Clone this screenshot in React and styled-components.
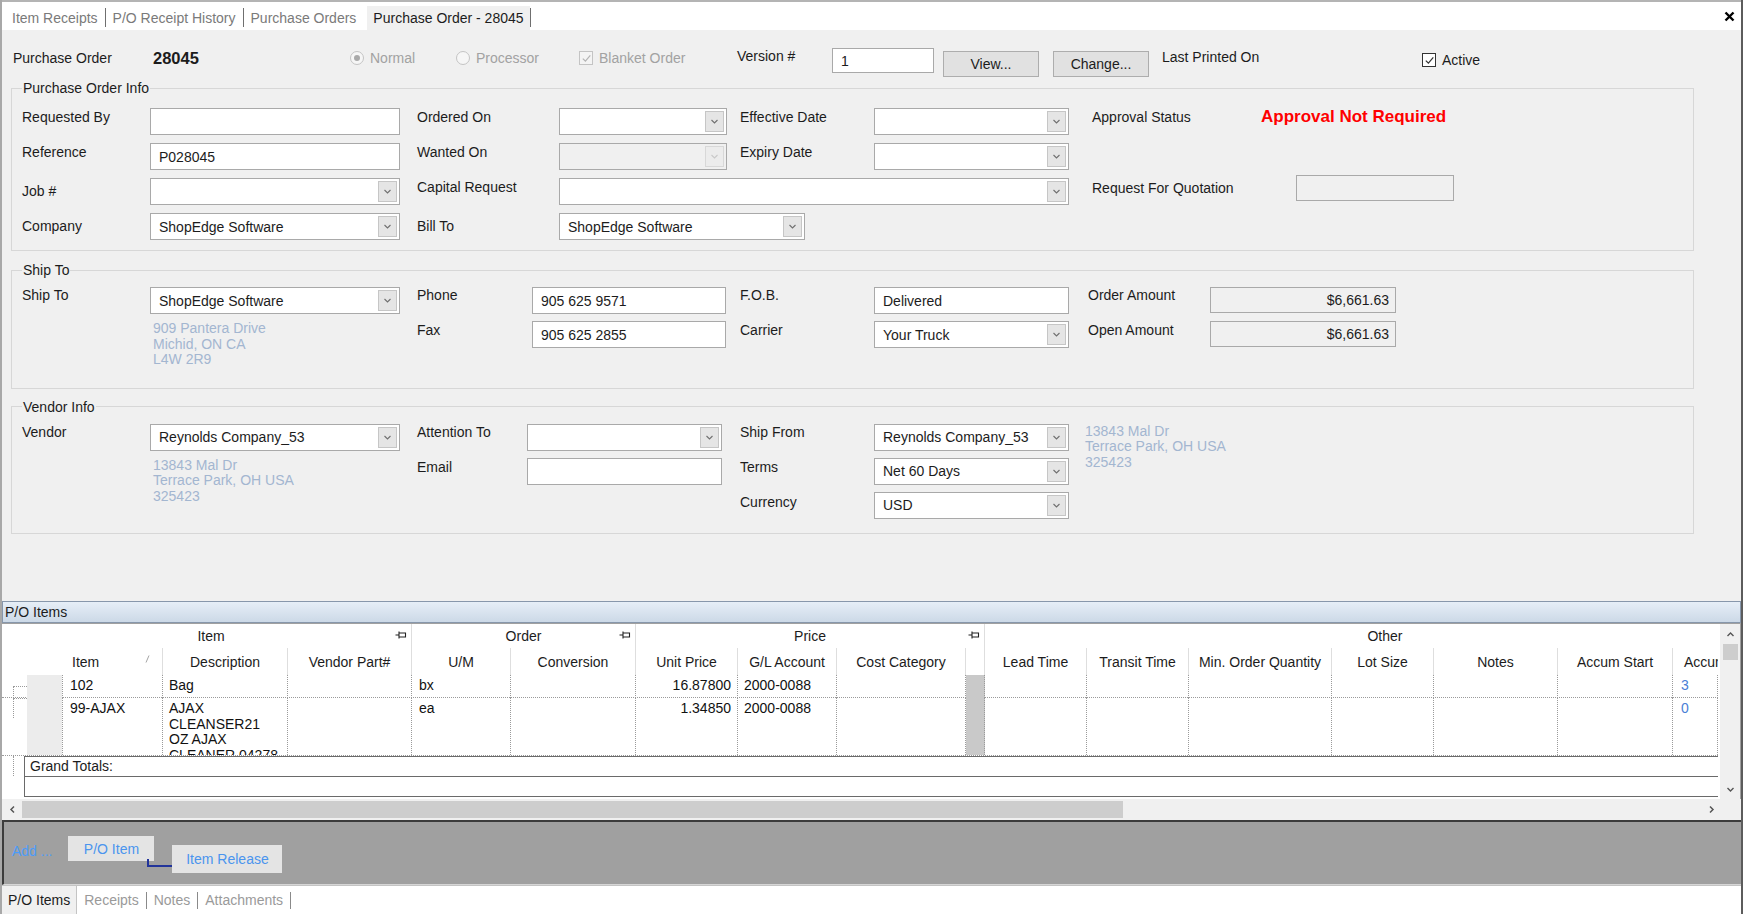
import React from "react";
import styled, { createGlobalStyle, css } from "styled-components";

const FONT = `"Liberation Sans", Arial, Helvetica, sans-serif`;

const GlobalStyle = createGlobalStyle`
  * { box-sizing: border-box; }
  html, body { margin: 0; padding: 0; background: #f0f0f0; }
  body { font-family: ${FONT}; font-size: 14px; color: #1c1c1c; }
`;

const place = css`
  ${(p) => (p.$col ? `grid-column: ${p.$col};` : "")}
  ${(p) => (p.$row ? `grid-row: ${p.$row};` : "")}
`;

/* ---------- icons ---------- */

const CHEVRONS = {
  down: "M1.5 3l3 3 3-3",
  up: "M1.5 6l3-3 3 3",
  left: "M6 1.5l-3 3 3 3",
  right: "M3 1.5l3 3-3 3",
};

const Chevron = ({ dir = "down", color = "#6a6a6a", size = 9, width = 1.1 }) => (
  <svg width={size} height={size} viewBox="0 0 9 9">
    <path d={CHEVRONS[dir]} fill="none" stroke={color} strokeWidth={width} />
  </svg>
);

const PinIcon = () => (
  <svg width="12" height="10" viewBox="0 0 12 10">
    <path d="M0.5 5H4M4 1.5V8.5M4 3H10.5V7H4" fill="none" stroke="#222" strokeWidth="1.1" />
  </svg>
);

const CloseIcon = () => (
  <svg width="11" height="11" viewBox="0 0 11 11">
    <path d="M1.5 1.5L9.5 9.5M9.5 1.5L1.5 9.5" stroke="#000" strokeWidth="2.4" />
  </svg>
);

const CheckMark = ({ color }) => (
  <svg width="11" height="11" viewBox="0 0 11 11">
    <path d="M1.8 5.6l2.6 2.6 4.9-5.8" fill="none" stroke={color} strokeWidth="1.2" />
  </svg>
);

/* ---------- window ---------- */

const Window = styled.div`
  width: 1743px;
  height: 914px;
  display: flex;
  flex-direction: column;
  background: #f0f0f0;
  border-left: 2px solid #a8a8a8;
  border-right: 2px solid #5c5c5c;
  overflow: hidden;
`;

const TopTabs = styled.div`
  height: 30px;
  flex: none;
  display: flex;
  align-items: flex-end;
  background: #fff;
  border-top: 2px solid #b4b4b4;
  padding-left: 3px;
`;

const Tab = styled.div`
  height: 24px;
  display: flex;
  align-items: center;
  padding: 0 ${(p) => (p.$active ? 6 : 7)}px;
  white-space: nowrap;
  color: ${(p) => (p.$active ? "#1c1c1c" : "#7a7a7a")};
  background: ${(p) => (p.$active ? "#f0f0f0" : "transparent")};
  ${(p) => (p.$active ? "margin-left: 4px;" : "")}
`;

const TabSep = styled.span`
  width: 1px;
  height: 19px;
  margin-bottom: 3px;
  background: #6f6f6f;
`;

const CloseBtn = styled.div`
  margin-left: auto;
  margin-right: 6px;
  align-self: center;
  display: flex;
`;

const Body = styled.div`
  flex: 1;
  min-height: 0;
  padding-left: 9px;
  display: flex;
  flex-direction: column;
`;

/* ---------- header row ---------- */

const HeaderRow = styled.div`
  height: 50px;
  flex: none;
  padding-top: 6px;
  display: flex;
  align-items: center;
`;

const HCell = styled.div`
  width: ${(p) => p.$w}px;
  margin-left: ${(p) => p.$ml || 0}px;
  margin-top: ${(p) => p.$mt || 0}px;
  margin-bottom: ${(p) => p.$mb || 0}px;
  display: flex;
  align-items: center;
  gap: 6px;
  white-space: nowrap;
  color: ${(p) => (p.$dim ? "#a2a2a2" : "#1c1c1c")};
`;

const PoNumber = styled.span`
  font-weight: bold;
  font-size: 16.5px;
`;

const RadioDot = styled.span`
  width: 14px;
  height: 14px;
  border-radius: 50%;
  border: 1px solid #c4c4c4;
  background: #f6f6f6;
  display: flex;
  align-items: center;
  justify-content: center;
  &::after {
    content: "";
    width: 6px;
    height: 6px;
    border-radius: 50%;
    background: ${(p) => (p.$on ? "#a9a9a9" : "transparent")};
  }
`;

const CheckBox = styled.span`
  width: 14px;
  height: 14px;
  border: 1px solid ${(p) => (p.$disabled ? "#c4c4c4" : "#333")};
  background: ${(p) => (p.$disabled ? "#f4f4f4" : "#fff")};
  display: flex;
  align-items: center;
  justify-content: center;
`;

const Button = styled.div`
  width: 96px;
  height: 26px;
  margin-left: ${(p) => p.$ml}px;
  margin-top: 12px;
  display: flex;
  align-items: center;
  justify-content: center;
  background: #e1e1e1;
  border: 1px solid #adadad;
`;

/* ---------- form groups ---------- */

const Group = styled.fieldset`
  width: 1683px;
  flex: none;
  margin: ${(p) => p.$mt || 0}px 0 0 0;
  padding: ${(p) => p.$pt}px 10px ${(p) => p.$pb}px 10px;
  border: 1px solid #d7d7d7;
  min-width: 0;
`;

const Legend = styled.legend`
  padding: 0 1px;
  line-height: 16px;
  color: #1c1c1c;
`;

const FormGrid = styled.div`
  display: grid;
  grid-template-columns: ${(p) => p.$cols};
  grid-auto-rows: minmax(27px, auto);
  row-gap: ${(p) => p.$gap}px;
  align-items: start;
`;

const Label = styled.div`
  ${place}
  padding-left: ${(p) => p.$pl || 0}px;
  padding-top: ${(p) => (p.$pt === undefined ? 1 : p.$pt)}px;
  line-height: 16px;
  white-space: nowrap;
  color: #1c1c1c;
`;

const Box = styled.div`
  ${place}
  width: ${(p) => p.$w}px;
  height: ${(p) => p.$h || 27}px;
  margin-left: ${(p) => p.$ml || 0}px;
  margin-top: ${(p) => p.$mt || 0}px;
  display: flex;
  align-items: center;
  justify-content: ${(p) => (p.$right ? "flex-end" : "flex-start")};
  padding: 0 ${(p) => (p.$right ? 6 : 2)}px 0 8px;
  background: ${(p) => (p.$disabled ? "#f0f0f0" : "#fff")};
  border: 1px solid #a9a9a9;
  white-space: nowrap;
  overflow: hidden;
`;

const BoxText = styled.span`
  flex: 1;
`;

const DropBtn = styled.span`
  flex: none;
  width: 19px;
  height: 21px;
  display: flex;
  align-items: center;
  justify-content: center;
  background: ${(p) => (p.$disabled ? "#ececec" : "#e5e5e5")};
  border: 1px solid ${(p) => (p.$disabled ? "#d8d8d8" : "#c6c6c6")};
`;

const Combo = ({ value, disabled, ...rest }) => (
  <Box $disabled={disabled} {...rest}>
    <BoxText>{value}</BoxText>
    <DropBtn $disabled={disabled}>
      <Chevron color={disabled ? "#c9c9c9" : "#707070"} />
    </DropBtn>
  </Box>
);

const Approval = styled.div`
  ${place}
  color: #ff0000;
  font-weight: bold;
  font-size: 17px;
  line-height: 18px;
  white-space: nowrap;
`;

const Address = styled.div`
  ${place}
  padding-left: ${(p) => p.$pl || 0}px;
  color: #a3b6d0;
  line-height: 15.5px;
  white-space: nowrap;
`;

const Spacer = styled.div`
  flex: 1;
`;

/* ---------- items grid ---------- */

const PanelHeader = styled.div`
  height: 22px;
  flex: none;
  display: flex;
  align-items: center;
  padding-left: 2px;
  border: 1px solid #8797ab;
  background: linear-gradient(#e6eef7, #ccd9e7);
`;

const GridFrame = styled.div`
  height: 176px;
  flex: none;
  display: flex;
  background: #fff;
  border-top: 1px solid #a0a0a0;
  border-right: 1px solid #a0a0a0;
`;

const GridMain = styled.div`
  flex: 1;
  overflow: hidden;
  display: flex;
  flex-direction: column;
`;

const GridRow = styled.div`
  display: grid;
  grid-template-columns: ${(p) => p.$cols};
  height: ${(p) => p.$h}px;
  flex: none;
  width: 1716px;
  ${(p) => (p.$dotted ? "border-bottom: 1px dotted #9a9a9a;" : "")}
`;

const GroupHead = styled.div`
  display: flex;
  align-items: center;
  justify-content: center;
  position: relative;
  padding-left: ${(p) => p.$pl || 0}px;
  border-right: ${(p) => (p.$line ? "1px solid #dedede" : "none")};
`;

const PinSlot = styled.span`
  position: absolute;
  right: 4px;
  top: 6px;
  display: flex;
`;

const ColHead = styled.div`
  display: flex;
  align-items: center;
  justify-content: ${(p) => (p.$left ? "flex-start" : "center")};
  padding-left: ${(p) => p.$pl || 0}px;
  white-space: nowrap;
  overflow: hidden;
  position: relative;
  border-right: ${(p) => (p.$line ? "1px solid #dedede" : "none")};
`;

const SortMark = styled.span`
  position: absolute;
  right: 12px;
  top: 7px;
  display: flex;
`;

const Cell = styled.div`
  padding: 3px 6px 0 ${(p) => (p.$pl === undefined ? 6 : p.$pl)}px;
  line-height: 15.5px;
  text-align: ${(p) => (p.$right ? "right" : "left")};
  color: ${(p) => p.$color || "#111"};
  background: ${(p) => p.$bg || "transparent"};
  border-right: 1px dotted #9a9a9a;
  overflow: hidden;
  white-space: nowrap;
`;

const LeadCell = styled.div`
  display: flex;
  border-right: 1px dotted #9a9a9a;
`;

const Tree = styled.div`
  width: 14px;
  margin-left: 11px;
  border-left: 1px dotted #9a9a9a;
  height: ${(p) => p.$h}px;
  align-self: flex-start;
  margin-top: ${(p) => p.$mt || 0}px;
  border-top: 1px dotted #9a9a9a;
`;

const Selector = styled.div`
  flex: 1;
  background: #ececec;
`;

const TotalsRow = styled.div`
  display: flex;
  height: 41px;
  flex: none;
`;

const TotalsGutter = styled.div`
  width: 22px;
  flex: none;
  display: flex;
`;

const TotalsGutterLine = styled.div`
  width: 1px;
  margin-left: 11px;
  height: 20px;
  border-left: 1px dotted #9a9a9a;
`;

const TotalsBox = styled.div`
  width: 1694px;
  border-top: 1px solid #6a6a6a;
  border-left: 1px solid #6a6a6a;
  border-bottom: 1px solid #6a6a6a;
  display: flex;
  flex-direction: column;
`;

const TotalsLabel = styled.div`
  height: 20px;
  padding-left: 5px;
  line-height: 19px;
  border-bottom: 1px solid #6a6a6a;
`;

const VScroll = styled.div`
  width: 20px;
  flex: none;
  background: #f0f0f0;
  display: flex;
  flex-direction: column;
  align-items: center;
`;

const ArrowBox = styled.div`
  width: 20px;
  height: ${(p) => p.$h || 18}px;
  display: flex;
  align-items: center;
  justify-content: center;
`;

const VThumb = styled.div`
  width: 15px;
  height: 16px;
  background: #cdcdcd;
`;

const HScroll = styled.div`
  height: 21px;
  flex: none;
  display: flex;
  align-items: center;
  background: #f0f0f0;
`;

const HThumb = styled.div`
  width: 1101px;
  height: 17px;
  background: #cdcdcd;
`;

/* ---------- add panel / bottom tabs ---------- */

const AddPanel = styled.div`
  height: 65px;
  flex: none;
  display: flex;
  align-items: flex-start;
  background: #a0a0a0;
  border-top: 2px solid #3c3c3c;
  border-left: 2px solid #3c3c3c;
  border-bottom: 1px solid #d6d6d6;
`;

const AddLink = styled.div`
  margin: 21px 0 0 8px;
  color: #4c9cf8;
  line-height: 16px;
`;

const AddButton = styled.div`
  width: ${(p) => p.$w}px;
  height: ${(p) => p.$h}px;
  margin-top: ${(p) => p.$mt}px;
  margin-left: ${(p) => p.$ml}px;
  display: flex;
  align-items: center;
  justify-content: center;
  background: #e4e4e4;
  color: #4a94ee;
`;

const Connector = styled.div`
  width: 25px;
  height: 8px;
  margin-top: 37px;
  margin-left: -7px;
  border-left: 2px solid #22349a;
  border-bottom: 2px solid #22349a;
`;

const BottomTabs = styled.div`
  height: 29px;
  flex: none;
  display: flex;
  align-items: center;
  background: #fff;
  border-top: 1px solid #c4c4c4;
`;

const BottomTab = styled.div`
  height: 100%;
  display: flex;
  align-items: center;
  padding: 0 ${(p) => (p.$active ? 6 : 7)}px;
  color: ${(p) => (p.$active ? "#1c1c1c" : "#9a9a9a")};
  background: ${(p) => (p.$active ? "#f0f0f0" : "transparent")};
  border-right: ${(p) => (p.$active ? "1px solid #c4c4c4" : "none")};
  white-space: nowrap;
`;

const BottomSep = styled.span`
  width: 1px;
  height: 17px;
  background: #8a8a8a;
`;

/* ---------- data ---------- */

const COLS = [61, 100, 125, 124, 99, 125, 102, 99, 129, 19, 102, 102, 143, 102, 124, 115, 45];
const GRID_COLS = COLS.map((w) => `${w}px`).join(" ");
const HEAD_COLS = ["9px", "152px", ...COLS.slice(2).map((w) => `${w}px`)].join(" ");

const HEADERS = [
  "Description",
  "Vendor Part#",
  "U/M",
  "Conversion",
  "Unit Price",
  "G/L Account",
  "Cost Category",
  "",
  "Lead Time",
  "Transit Time",
  "Min. Order Quantity",
  "Lot Size",
  "Notes",
  "Accum Start",
];

const ROWS = [
  { item: "102", desc: ["Bag"], um: "bx", price: "16.87800", gl: "2000-0088", accum: "3", h: 23 },
  {
    item: "99-AJAX",
    desc: ["AJAX", "CLEANSER21", "OZ AJAX", "CLEANER 04278"],
    um: "ea",
    price: "1.34850",
    gl: "2000-0088",
    accum: "0",
    h: 58,
  },
];

const Lines = ({ lines }) =>
  lines.map((l, i) => (
    <React.Fragment key={i}>
      {l}
      {i < lines.length - 1 && <br />}
    </React.Fragment>
  ));

export default function App() {
  return (
    <>
      <GlobalStyle />
      <Window>
        <TopTabs>
          <Tab>Item Receipts</Tab>
          <TabSep />
          <Tab>P/O Receipt History</Tab>
          <TabSep />
          <Tab>Purchase Orders</Tab>
          <Tab $active>Purchase Order - 28045</Tab>
          <TabSep />
          <CloseBtn>
            <CloseIcon />
          </CloseBtn>
        </TopTabs>

        <Body>
          <HeaderRow>
            <HCell $w={140} $ml={2}>Purchase Order</HCell>
            <HCell $w={197}>
              <PoNumber>28045</PoNumber>
            </HCell>
            <HCell $w={106} $dim>
              <RadioDot $on />
              Normal
            </HCell>
            <HCell $w={123} $dim>
              <RadioDot />
              Processor
            </HCell>
            <HCell $w={158} $dim>
              <CheckBox $disabled>
                <CheckMark color="#b4b4b4" />
              </CheckBox>
              Blanket Order
            </HCell>
            <HCell $w={95} $mb={5}>Version #</HCell>
            <Box $w={102} $h={25} $mt={5}>1</Box>
            <Button $ml={9}>View...</Button>
            <Button $ml={14}>Change...</Button>
            <HCell $w={260} $ml={13} $mb={3}>Last Printed On</HCell>
            <HCell $w={120} $mt={4}>
              <CheckBox>
                <CheckMark color="#333" />
              </CheckBox>
              Active
            </HCell>
          </HeaderRow>

          <Group $pt={12} $pb={10}>
            <Legend>Purchase Order Info</Legend>
            <FormGrid $cols="128px 250px 159px 168px 147px 195px 192px 1fr" $gap={8}>
              <Label $col={1} $row={1}>Requested By</Label>
              <Box $col={2} $row={1} $w={250} />
              <Label $col={3} $row={1} $pl={17}>Ordered On</Label>
              <Combo $col={4} $row={1} $w={168} />
              <Label $col={5} $row={1} $pl={13}>Effective Date</Label>
              <Combo $col={6} $row={1} $w={195} />
              <Label $col={7} $row={1} $pl={23}>Approval Status</Label>
              <Approval $col={8} $row={1}>Approval Not Required</Approval>

              <Label $col={1} $row={2}>Reference</Label>
              <Box $col={2} $row={2} $w={250}>P028045</Box>
              <Label $col={3} $row={2} $pl={17}>Wanted On</Label>
              <Combo $col={4} $row={2} $w={168} disabled />
              <Label $col={5} $row={2} $pl={13}>Expiry Date</Label>
              <Combo $col={6} $row={2} $w={195} />

              <Label $col={1} $row={3} $pt={5}>Job #</Label>
              <Combo $col={2} $row={3} $w={250} />
              <Label $col={3} $row={3} $pl={17}>Capital Request</Label>
              <Combo $col="4 / span 3" $row={3} $w={510} />
              <Label $col={7} $row={3} $pl={23} $pt={2}>Request For Quotation</Label>
              <Box $col={8} $row={3} $w={158} $h={26} $ml={35} $mt={-3} $disabled />

              <Label $col={1} $row={4} $pt={5}>Company</Label>
              <Combo $col={2} $row={4} $w={250} value="ShopEdge Software" />
              <Label $col={3} $row={4} $pl={17} $pt={5}>Bill To</Label>
              <Combo $col="4 / span 3" $row={4} $w={246} value="ShopEdge Software" />
            </FormGrid>
          </Group>

          <Group $mt={11} $pt={9} $pb={20}>
            <Legend>Ship To</Legend>
            <FormGrid $cols="128px 250px 132px 194px 148px 195px 141px 186px 1fr" $gap={7}>
              <Label $col={1} $row={1} $pt={0}>Ship To</Label>
              <Combo $col={2} $row={1} $w={250} value="ShopEdge Software" />
              <Label $col={3} $row={1} $pl={17} $pt={0}>Phone</Label>
              <Box $col={4} $row={1} $w={194}>905 625 9571</Box>
              <Label $col={5} $row={1} $pl={14} $pt={0}>F.O.B.</Label>
              <Box $col={6} $row={1} $w={195}>Delivered</Box>
              <Label $col={7} $row={1} $pl={19} $pt={0}>Order Amount</Label>
              <Box $col={8} $row={1} $w={186} $h={26} $right $disabled>$6,661.63</Box>

              <Address $col={2} $row={2} $pl={3}>
                909 Pantera Drive
                <br />
                Michid, ON CA
                <br />
                L4W 2R9
              </Address>
              <Label $col={3} $row={2} $pl={17}>Fax</Label>
              <Box $col={4} $row={2} $w={194}>905 625 2855</Box>
              <Label $col={5} $row={2} $pl={14}>Carrier</Label>
              <Combo $col={6} $row={2} $w={195} value="Your Truck" />
              <Label $col={7} $row={2} $pl={19}>Open Amount</Label>
              <Box $col={8} $row={2} $w={186} $h={26} $right $disabled>$6,661.63</Box>
            </FormGrid>
          </Group>

          <Group $mt={10} $pt={9} $pb={14}>
            <Legend>Vendor Info</Legend>
            <FormGrid $cols="128px 250px 127px 195px 152px 195px 1fr" $gap={7}>
              <Label $col={1} $row={1} $pt={0}>Vendor</Label>
              <Combo $col={2} $row={1} $w={250} value="Reynolds Company_53" />
              <Label $col={3} $row={1} $pl={17} $pt={0}>Attention To</Label>
              <Combo $col={4} $row={1} $w={195} />
              <Label $col={5} $row={1} $pl={18} $pt={0}>Ship From</Label>
              <Combo $col={6} $row={1} $w={195} value="Reynolds Company_53" />
              <Address $col={7} $row="1 / span 3" $pl={16}>
                13843 Mal Dr
                <br />
                Terrace Park, OH USA
                <br />
                325423
              </Address>

              <Address $col={2} $row="2 / span 2" $pl={3}>
                13843 Mal Dr
                <br />
                Terrace Park, OH USA
                <br />
                325423
              </Address>
              <Label $col={3} $row={2} $pl={17}>Email</Label>
              <Box $col={4} $row={2} $w={195} />
              <Label $col={5} $row={2} $pl={18}>Terms</Label>
              <Combo $col={6} $row={2} $w={195} value="Net 60 Days" />

              <Label $col={5} $row={3} $pl={18} $pt={2}>Currency</Label>
              <Combo $col={6} $row={3} $w={195} value="USD" />
            </FormGrid>
          </Group>
          <Spacer />
        </Body>

        <PanelHeader>P/O Items</PanelHeader>

        <GridFrame>
          <GridMain>
            <GridRow $cols="9px 401px 224px 349px 1fr" $h={24}>
              <div />
              <GroupHead $line>
                Item
                <PinSlot>
                  <PinIcon />
                </PinSlot>
              </GroupHead>
              <GroupHead $line>
                Order
                <PinSlot>
                  <PinIcon />
                </PinSlot>
              </GroupHead>
              <GroupHead $line>
                Price
                <PinSlot>
                  <PinIcon />
                </PinSlot>
              </GroupHead>
              <GroupHead $pl={67}>Other</GroupHead>
            </GridRow>

            <GridRow $cols={HEAD_COLS} $h={27}>
              <div />
              <ColHead $left $pl={61} $line>
                Item
                <SortMark>
                  <svg width="5" height="8" viewBox="0 0 5 8">
                    <path d="M1 7.5L4 0.5" stroke="#9a9a9a" strokeWidth="0.9" />
                  </svg>
                </SortMark>
              </ColHead>
              {HEADERS.map((h, i) => (
                <ColHead key={i} $line>
                  {h}
                </ColHead>
              ))}
              <ColHead $left $pl={11}>Accum End</ColHead>
            </GridRow>

            {ROWS.map((r, idx) => (
              <GridRow key={r.item} $cols={GRID_COLS} $h={r.h} $dotted>
                <LeadCell>
                  <Tree $h={idx === 0 ? 12 : 20} $mt={idx === 0 ? 11 : 0} />
                  <Selector />
                </LeadCell>
                <Cell $pl={7}>{r.item}</Cell>
                <Cell>
                  <Lines lines={r.desc} />
                </Cell>
                <Cell />
                <Cell $pl={7}>{r.um}</Cell>
                <Cell />
                <Cell $right>{r.price}</Cell>
                <Cell>{r.gl}</Cell>
                <Cell />
                <Cell $bg="#c9c9c9" />
                <Cell />
                <Cell />
                <Cell />
                <Cell />
                <Cell />
                <Cell />
                <Cell $pl={8} $color="#4a80d6">
                  {r.accum}
                </Cell>
              </GridRow>
            ))}

            <TotalsRow>
              <TotalsGutter>
                <TotalsGutterLine />
              </TotalsGutter>
              <TotalsBox>
                <TotalsLabel>Grand Totals:</TotalsLabel>
              </TotalsBox>
            </TotalsRow>
          </GridMain>
          <VScroll>
            <ArrowBox $h={20}>
              <Chevron dir="up" color="#555" width={1.4} />
            </ArrowBox>
            <VThumb />
            <Spacer />
            <ArrowBox $h={20}>
              <Chevron dir="down" color="#555" width={1.4} />
            </ArrowBox>
          </VScroll>
        </GridFrame>

        <HScroll>
          <ArrowBox $h={21}>
            <Chevron dir="left" color="#555" width={1.5} />
          </ArrowBox>
          <HThumb />
          <Spacer />
          <ArrowBox $h={21}>
            <Chevron dir="right" color="#555" width={1.5} />
          </ArrowBox>
          <ArrowBox $h={21} />
        </HScroll>

        <AddPanel>
          <AddLink>Add ...</AddLink>
          <AddButton $w={86} $h={25} $mt={14} $ml={16}>
            P/O Item
          </AddButton>
          <Connector />
          <AddButton $w={110} $h={28} $mt={23} $ml={0}>
            Item Release
          </AddButton>
        </AddPanel>

        <BottomTabs>
          <BottomTab $active>P/O Items</BottomTab>
          <BottomTab>Receipts</BottomTab>
          <BottomSep />
          <BottomTab>Notes</BottomTab>
          <BottomSep />
          <BottomTab>Attachments</BottomTab>
          <BottomSep />
        </BottomTabs>
      </Window>
    </>
  );
}
